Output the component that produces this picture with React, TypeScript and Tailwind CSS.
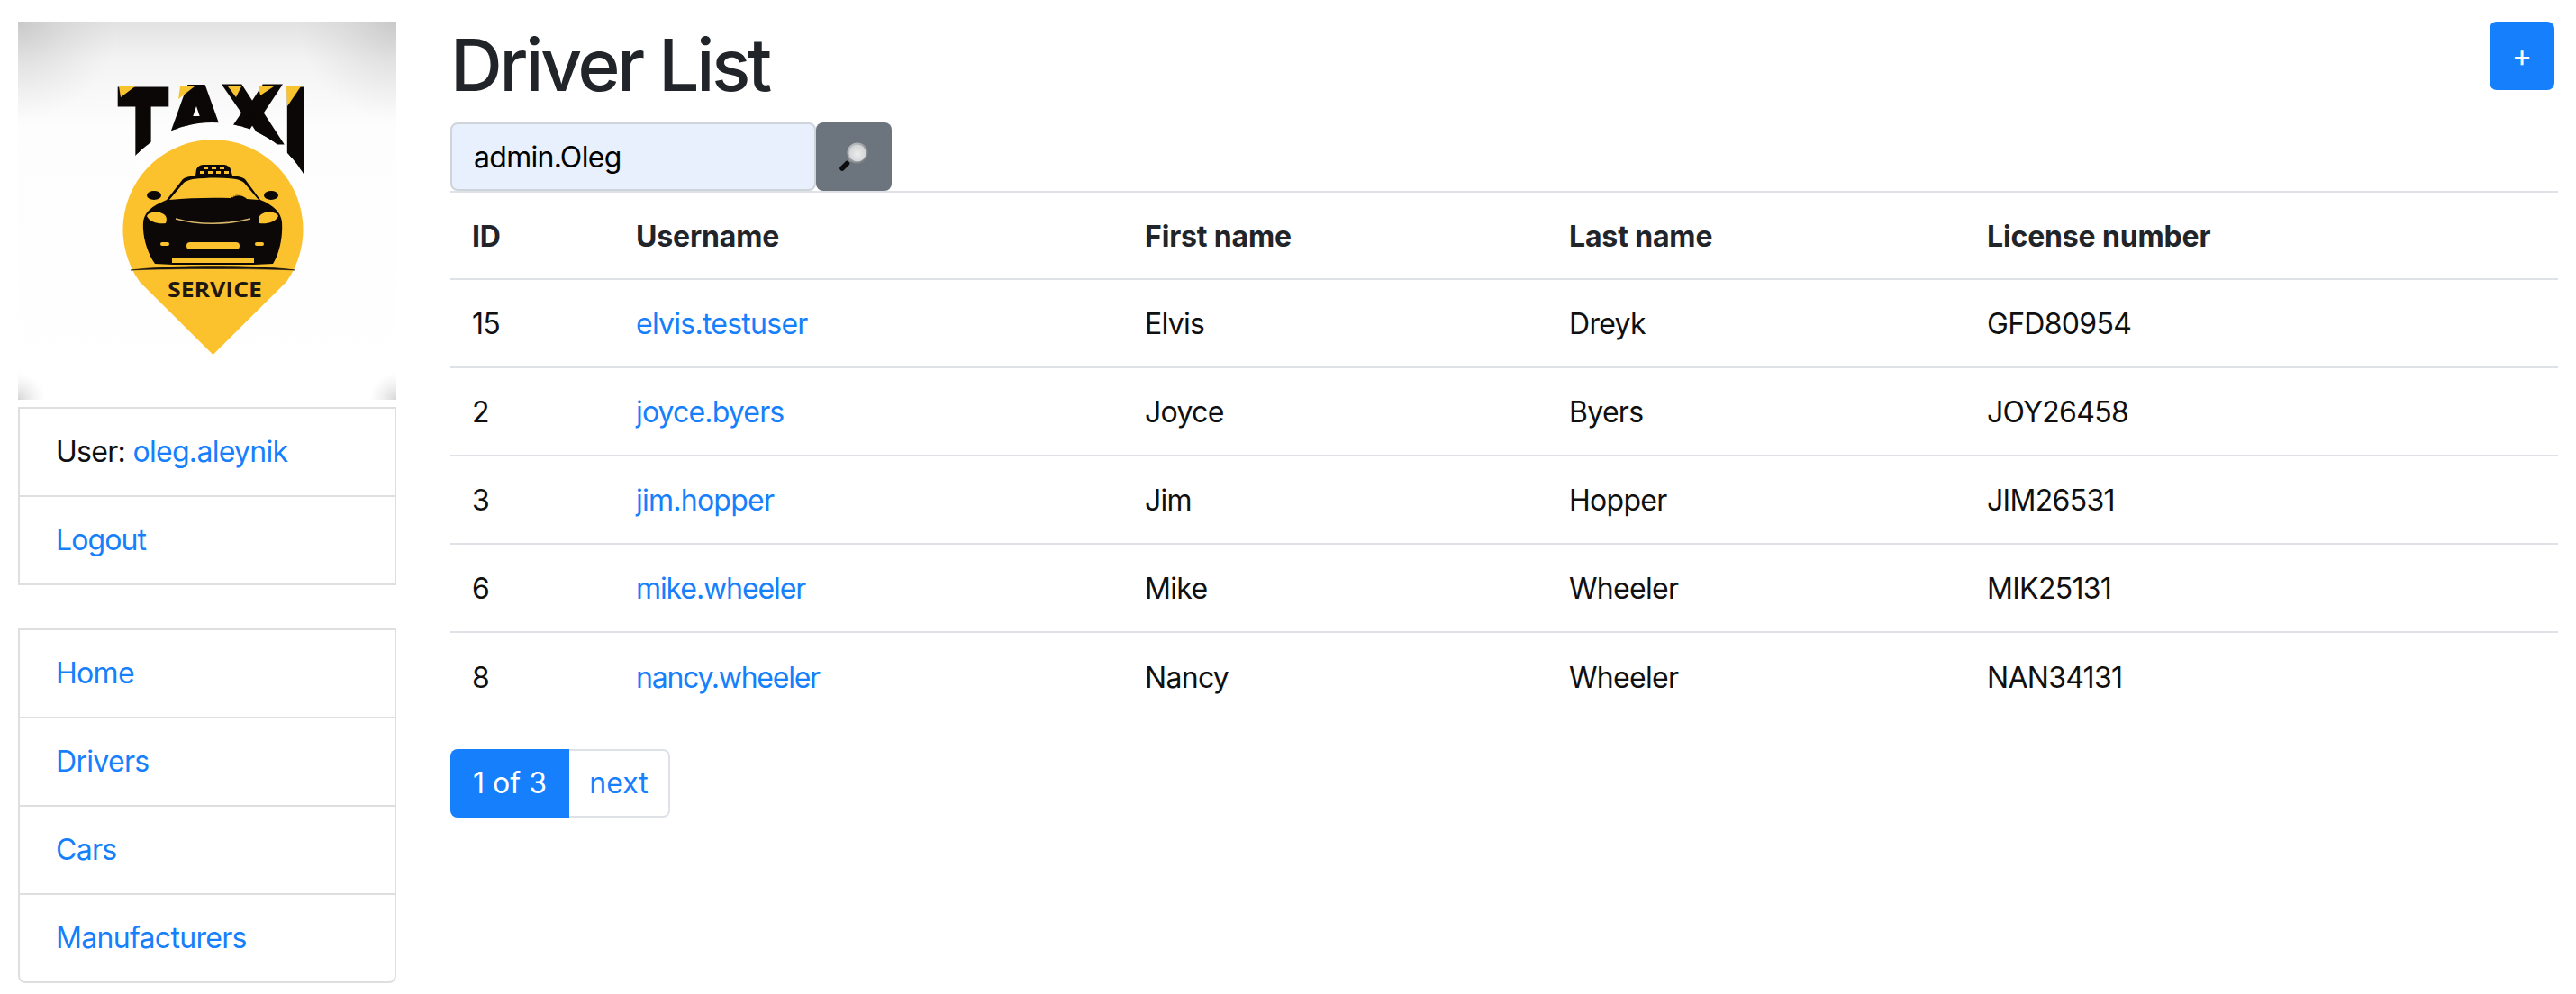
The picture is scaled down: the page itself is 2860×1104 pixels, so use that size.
import React from "react";

const rows = [
  ["15", "elvis.testuser", "Elvis", "Dreyk", "GFD80954", "tracking-[-0.75px]"],
  ["2", "joyce.byers", "Joyce", "Byers", "JOY26458", "tracking-[-0.85px]"],
  ["3", "jim.hopper", "Jim", "Hopper", "JIM26531", "tracking-[-0.75px]"],
  ["6", "mike.wheeler", "Mike", "Wheeler", "MIK25131", "tracking-[-1.1px]"],
  ["8", "nancy.wheeler", "Nancy", "Wheeler", "NAN34131", "tracking-[-1.25px]"],
];

function Logo() {
  return (
    <svg viewBox="20 24 420 420" className="w-[420px] h-[420px] block">
      <defs>
        <linearGradient id="top" x1="0" y1="0" x2="0" y2="1">
          <stop offset="0" stopColor="#e2e2e2" />
          <stop offset="0.1" stopColor="#f3f3f3" />
          <stop offset="0.28" stopColor="#fdfdfd" />
          <stop offset="1" stopColor="#ffffff" />
        </linearGradient>
        <radialGradient id="cTL" cx="0" cy="0" r="1">
          <stop offset="0" stopColor="#b8b8b8" stopOpacity="0.6" />
          <stop offset="1" stopColor="#d0d0d0" stopOpacity="0" />
        </radialGradient>
        <radialGradient id="cBL" cx="0" cy="1" r="1">
          <stop offset="0" stopColor="#c4c4c4" stopOpacity="0.7" />
          <stop offset="1" stopColor="#e0e0e0" stopOpacity="0" />
        </radialGradient>
        <radialGradient id="cBR" cx="1" cy="1" r="1">
          <stop offset="0" stopColor="#c4c4c4" stopOpacity="0.7" />
          <stop offset="1" stopColor="#e0e0e0" stopOpacity="0" />
        </radialGradient>
        <radialGradient id="cTR" cx="1" cy="0" r="1">
          <stop offset="0" stopColor="#b8b8b8" stopOpacity="0.6" />
          <stop offset="1" stopColor="#d0d0d0" stopOpacity="0" />
        </radialGradient>
        <clipPath id="arc">
          <path clipRule="evenodd" d="M120 90H350V200H120Z M236 136A118 118 0 1 0 236.01 136Z" />
        </clipPath>
      </defs>
      <rect x="20" y="24" width="420" height="420" fill="url(#top)" />
      <rect x="20" y="24" width="110" height="110" fill="url(#cTL)" />
      <rect x="330" y="24" width="110" height="110" fill="url(#cTR)" />
      <rect x="20" y="414" width="30" height="30" fill="url(#cBL)" />
      <rect x="410" y="414" width="30" height="30" fill="url(#cBR)" />

      <g clipPath="url(#arc)">
        <text fontFamily="'Liberation Sans', sans-serif" fontWeight="700" fill="#0a0706" stroke="#0a0706" strokeWidth="7">
          <tspan x="132" y="192" fontSize="134" textLength="54" lengthAdjust="spacingAndGlyphs">T</tspan>
          <tspan x="187" y="157" fontSize="88" textLength="62" lengthAdjust="spacingAndGlyphs">A</tspan>
          <tspan x="250" y="157" fontSize="88" textLength="60" lengthAdjust="spacingAndGlyphs">X</tspan>
          <tspan x="315" y="192" fontSize="134" textLength="26" lengthAdjust="spacingAndGlyphs">I</tspan>
        </text>
      </g>
      <g fill="#f7c32e">
        <polygon points="132,96 150,96 134,108" />
        <polygon points="200,96 216,96 198,110" />
        <polygon points="253,96 268,96 262,108" />
        <polygon points="287,96 304,96 289,106" />
        <polygon points="318,96 334,96 319,118" />
      </g>

      <path d="M236.5 394L155 313A100 100 0 1 1 318 313Z" fill="#fcc22e" />

      {/* car */}
      <path
        d="M159 247C160 236 168 229 185 222L203 199C207 196 212 196 217 195L218 188C220 184 223 183 227 183H247C252 183 255 185 256 188L258 195C263 196 268 196 272 199L289 222C304 228 312 236 313 247C314 262 311 280 303 293L282 294H192L172 293C163 280 158 262 159 247Z"
        fill="#0b0807"
      />
      <ellipse cx="171" cy="217" rx="8" ry="5" fill="#0b0807" />
      <ellipse cx="301" cy="217" rx="8" ry="5" fill="#0b0807" />
      <path d="M188 222L204 203C206 201 210 200 214 199C232 197 248 197 262 199C266 200 269 201 271 203L287 222C255 219 220 219 188 222Z" fill="#fcc22e" />
      <path d="M256 221C258 216 268 214 274 221Z" fill="#0b0807" />
      <path d="M258 219C262 216 268 216 272 219" fill="none" stroke="#fcc22e" strokeWidth="1" />
      <path d="M163 240C165 235 176 234 182 238C186 241 185 245 184 248C176 249 166 247 163 240Z" fill="#fcc22e" />
      <path d="M309 240C307 235 296 234 290 238C286 241 287 245 288 248C296 249 306 247 309 240Z" fill="#fcc22e" />
      <path d="M195 243C220 250 252 250 278 243" fill="none" stroke="#d9b66a" strokeWidth="1.6" />
      <rect x="207" y="269" width="59" height="8" rx="4" fill="#fcc22e" />
      <rect x="178" y="269" width="10" height="4" rx="2" fill="#fcc22e" />
      <rect x="283" y="269" width="10" height="4" rx="2" fill="#fcc22e" />
      <rect x="191" y="287" width="91" height="5" fill="#fcc22e" />
      <path d="M145 300C190 294 285 294 328 300C285 298 190 298 145 300Z" fill="#1a1410" stroke="#1a1410" strokeWidth="0.6" />
      <g fill="#fcc22e">
        <rect x="226" y="185" width="5" height="3" />
        <rect x="235" y="185" width="5" height="3" />
        <rect x="244" y="185" width="5" height="3" />
        <rect x="222" y="190" width="5" height="3" />
        <rect x="231" y="190" width="5" height="3" />
        <rect x="240" y="190" width="5" height="3" />
        <rect x="249" y="190" width="5" height="3" />
      </g>
      <text x="186" y="330" fontSize="23" fontWeight="700" fontFamily="'Open Sans', sans-serif" fill="#1f1811" textLength="105" lengthAdjust="spacingAndGlyphs">
        SERVICE
      </text>
    </svg>
  );
}

function Magnifier() {
  return (
    <svg viewBox="0 0 34 34" className="w-[34px] h-[34px] block">
      <defs>
        <radialGradient id="glass" cx="0.5" cy="0.55" r="0.6">
          <stop offset="0" stopColor="#eceded" />
          <stop offset="1" stopColor="#c9cbcd" />
        </radialGradient>
        <linearGradient id="rim" x1="0" y1="0" x2="1" y2="1">
          <stop offset="0" stopColor="#c4c6c8" />
          <stop offset="1" stopColor="#70767c" />
        </linearGradient>
      </defs>
      <path d="M13 21L9 25" stroke="#8a8d90" strokeWidth="3" />
      <path d="M9.5 24.5L4 30" stroke="#0c0d0f" strokeWidth="5.5" strokeLinecap="round" />
      <circle cx="21" cy="13" r="10.5" fill="url(#glass)" stroke="url(#rim)" strokeWidth="2" />
    </svg>
  );
}

export default function App() {
  return (
    <div className="flex w-[2860px] h-[1104px] bg-white pl-[20px] pr-[20px] gap-[60px] overflow-hidden font-['Inter','Liberation_Sans',sans-serif] text-[32px] leading-[48px] text-[#212529]">
      <aside className="w-[420px] shrink-0 pt-[24px]">
        <Logo />
        <ul className="mt-[8px] border-2 border-[#dfdfdf]">
          <li className="h-[98px] px-[40px] flex items-center border-b-2 border-[#dfdfdf] text-[#101010]">
            <span className="tracking-[-0.7px]">User:&nbsp;</span>
            <a className="text-[#167ffc] tracking-[-0.7px]">oleg.aleynik</a>
          </li>
          <li className="h-[96px] px-[40px] flex items-center">
            <a className="text-[#167ffc] tracking-[-0.9px]">Logout</a>
          </li>
        </ul>
        <ul className="mt-[48px] border-2 border-[#dfdfdf] rounded-b-[8px]">
          {["Home", "Drivers", "Cars", "Manufacturers"].map((t, i) => (
            <li key={t} className={i < 3 ? "h-[98px] px-[40px] flex items-center border-b-2 border-[#dfdfdf]" : "h-[96px] px-[40px] flex items-center"}>
              <a className="text-[#167ffc] tracking-[-0.7px]">{t}</a>
            </li>
          ))}
        </ul>
      </aside>

      <main className="flex-1 min-w-0">
        <div className="flex justify-between items-start pt-[24px]">
          <h1 className="text-[80px] leading-[96px] font-medium tracking-[-3.2px] text-[#212529] mb-[16px]">Driver List</h1>
          <button className="w-[72px] h-[76px] mr-[4px] rounded-[8px] bg-[#167ffc] text-white text-[34px] flex items-center justify-center">+</button>
        </div>
        <div className="flex h-[76px]">
          <div className="w-[406px] h-[76px] bg-[#e8f0fe] border-2 border-[#ced4da] rounded-[8px] px-[24px] pt-[2px] flex items-center text-black tracking-[-0.7px]">admin.Oleg</div>
          <button className="w-[84px] h-[76px] bg-[#6c757d] rounded-[8px] flex items-center justify-center">
            <Magnifier />
          </button>
        </div>
        <table className="w-full table-fixed border-collapse">
          <colgroup>
            <col className="w-[182px]" />
            <col className="w-[565px]" />
            <col className="w-[471px]" />
            <col className="w-[464px]" />
            <col />
          </colgroup>
          <thead>
            <tr className="border-t-2 border-b-2 border-[#dee2e6]">
              {["ID", "Username", "First name", "Last name", "License number"].map((h) => (
                <th key={h} className="h-[97px] px-[24px] pt-[2px] text-left font-bold tracking-[-0.15px] text-[#212529]">{h}</th>
              ))}
            </tr>
          </thead>
          <tbody className="tracking-[-0.7px]">
            {rows.map((r, i) => (
              <tr key={r[0]} className={i < 4 ? "border-b-2 border-[#dee2e6]" : ""}>
                <td className="h-[98px] px-[24px] pt-[2px] text-[#101010]">{r[0]}</td>
                <td className="h-[98px] px-[24px] pt-[2px]"><a className={"text-[#167ffc] " + r[5]}>{r[1]}</a></td>
                <td className="h-[98px] px-[24px] pt-[2px] text-[#101010]">{r[2]}</td>
                <td className="h-[98px] px-[24px] pt-[2px] text-[#101010]">{r[3]}</td>
                <td className="h-[98px] px-[24px] pt-[2px] text-[#101010]">{r[4]}</td>
              </tr>
            ))}
          </tbody>
        </table>
        <div className="flex mt-[32px] h-[76px]">
          <span className="w-[132px] bg-[#167ffc] text-white rounded-l-[8px] flex items-center justify-center">1 of 3</span>
          <a className="w-[112px] text-[#167ffc] border-2 border-l-0 border-[#dee2e6] rounded-r-[8px] flex items-center justify-center">next</a>
        </div>
      </main>
    </div>
  );
}
